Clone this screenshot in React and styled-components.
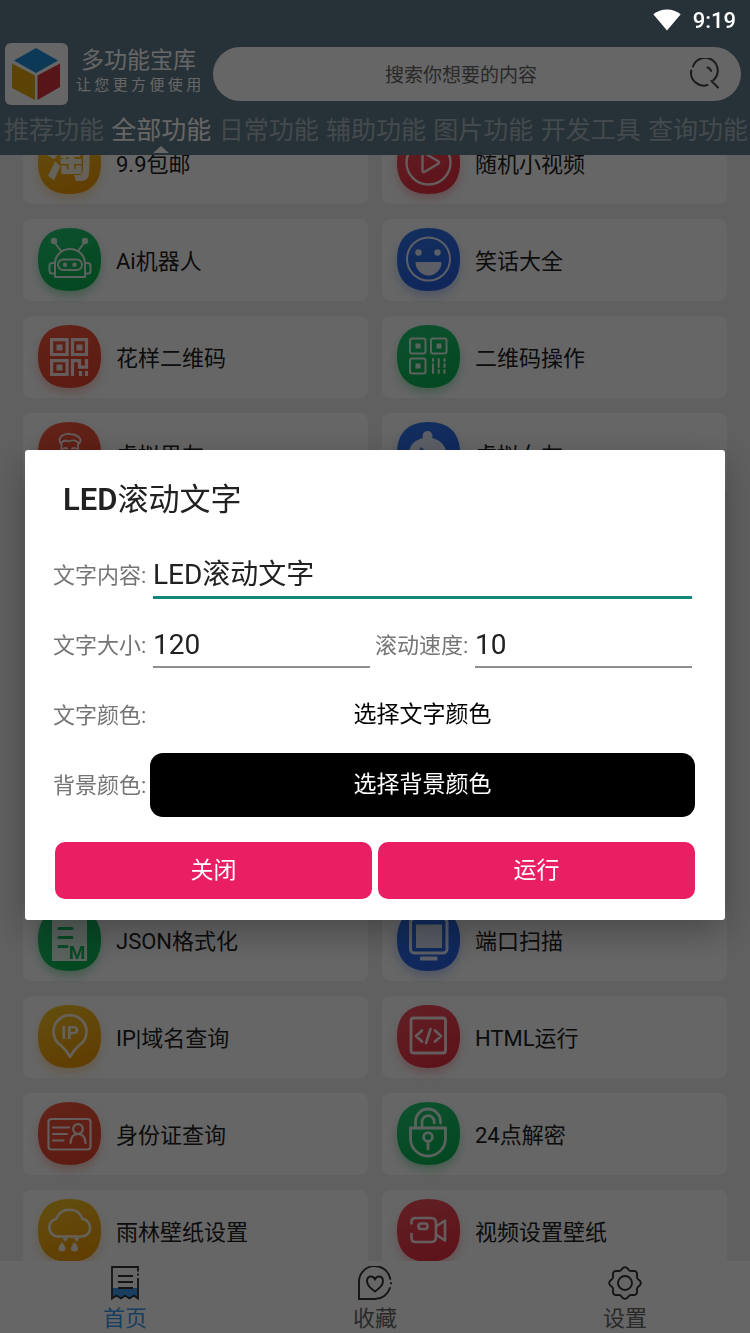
import React, { useId } from "react";
import styled, { createGlobalStyle } from "styled-components";

const GlobalStyle = createGlobalStyle`
  *, *::before, *::after { box-sizing: border-box; }
  body {
    margin: 0;
    background: #f0f0f0;
    font-family: Roboto, "Noto Sans CJK SC", sans-serif;
    color: #212121;
  }
  button, input { font: inherit; color: inherit; }
`;

/* ---------- page frame ---------- */

const Page = styled.div`
  height: 100vh;
  display: flex;
  flex-direction: column;
  overflow: hidden;
`;

const StatusBar = styled.div`
  position: fixed;
  top: 0;
  right: 0;
  z-index: 20;
  height: 40px;
  padding-right: 14px;
  display: flex;
  align-items: center;
  gap: 12px;
  color: #fff;
  font-size: 22px;
  font-weight: 500;
  svg { display: block; }
`;

const Header = styled.header`
  flex: none;
  padding-top: 43px;
  background: #607d8b;
  color: #fff;
`;

const Brand = styled.div`
  display: flex;
  align-items: center;
  height: 62px;
  padding: 0 9px 0 5px;
`;

const Logo = styled.svg`
  flex: none;
  width: 63px;
  height: 62px;
  margin-right: 8px;
`;

const BrandText = styled.div`
  flex: none;
  margin-right: 12px;
  padding-bottom: 4px;
  text-align: center;
  white-space: nowrap;
`;

const BrandName = styled.h1`
  margin: 0;
  font-size: 23px;
  font-weight: 400;
  line-height: 24px;
`;

const Slogan = styled.p`
  margin: 0;
  font-family: "Noto Sans CJK SC", sans-serif;
  font-size: 15px;
  line-height: 22px;
`;

const SearchBox = styled.label`
  flex: 1;
  min-width: 0;
  height: 54px;
  padding: 0 20px;
  display: flex;
  align-items: center;
  border-radius: 27px;
  background: #fff;
  color: #444;
  svg { flex: none; }
`;

const SearchInput = styled.input`
  flex: 1;
  min-width: 0;
  padding: 2px 0 0;
  border: 0;
  outline: 0;
  background: none;
  text-align: center;
  font-size: 19px;
  &::placeholder { color: #666; opacity: 1; }
`;

const Tabs = styled.nav`
  display: flex;
  justify-content: space-between;
  padding: 0 2px 0 4px;
`;

const Tab = styled.button`
  position: relative;
  flex: none;
  height: 50px;
  padding: 0 0 5px;
  border: 0;
  background: none;
  font-size: 25px;
  white-space: nowrap;
  color: ${(p) => (p.$active ? "#fff" : "rgba(255,255,255,.48)")};
  &::after {
    content: "";
    display: ${(p) => (p.$active ? "block" : "none")};
    position: absolute;
    left: calc(50% - 8px);
    bottom: 2px;
    border: 8px solid transparent;
    border-top: 0;
    border-bottom: 7px solid #fff;
  }
`;

/* ---------- function list ---------- */

const Content = styled.main`
  flex: 1;
  min-height: 0;
  padding: 0 23px;
  overflow: hidden;
  display: flex;
  flex-direction: column;
  justify-content: space-between;
`;

const Grid = styled.div`
  flex: none;
  display: grid;
  grid-template-columns: 1fr 1fr;
  gap: 15px 14px;
  margin-top: ${(p) => p.$above || 0}px;
  margin-bottom: ${(p) => p.$below || 0}px;
`;

const Card = styled.a`
  display: flex;
  align-items: center;
  gap: 15px;
  height: 82px;
  padding: 0 15px 2px;
  border-radius: 8px;
  background: #fefefe;
  color: inherit;
  text-decoration: none;
`;

const CardName = styled.span`
  padding-top: 5px;
  font-size: 22px;
  line-height: 32px;
  white-space: nowrap;
`;

const Tile = styled.svg`
  flex: none;
  width: 63px;
  height: 63px;
  overflow: visible;
  filter: drop-shadow(0 5px 4px ${(p) => p.$glow});
`;

/* ---------- bottom bar ---------- */

const BottomBar = styled.nav`
  flex: none;
  height: 72px;
  display: grid;
  grid-template-columns: repeat(3, 1fr);
  background: #fff;
`;

const BottomItem = styled.a`
  display: flex;
  flex-direction: column;
  align-items: center;
  padding-top: 5px;
  color: ${(p) => (p.$active ? "#3d9bf0" : "#666")};
  text-decoration: none;
  font-size: 22px;
  line-height: 38px;
  svg { display: block; color: #333; }
`;

/* ---------- dialog ---------- */

const Scrim = styled.div`
  position: fixed;
  inset: 0;
  z-index: 10;
  padding: 37px 25px 0;
  display: flex;
  align-items: center;
  background: rgba(0, 0, 0, 0.6);
`;

const Dialog = styled.form`
  width: 100%;
  padding: 0 30px 21px 28px;
  border-radius: 3px;
  background: #fff;
  box-shadow: 0 12px 36px rgba(0, 0, 0, 0.3);
`;

const DialogTitle = styled.h2`
  margin: 0;
  padding: 30px 10px 20px;
  font-size: 31px;
  font-weight: 600;
  line-height: 40px;
`;

const Regular = styled.span`
  font-weight: 400;
`;

const Row = styled.div`
  display: flex;
  align-items: center;
  height: 70px;
`;

const Label = styled.label`
  flex: none;
  width: 97px;
  padding-top: 2px;
  font-size: 22px;
  line-height: 32px;
  white-space: nowrap;
  color: #757575;
`;

const Field = styled.input`
  flex: 1 1 0;
  min-width: 0;
  height: ${(p) => (p.$active ? 48 : 46)}px;
  margin: 0 3px;
  padding: 0 0 ${(p) => (p.$active ? 4 : 0)}px;
  border: 0;
  border-bottom: ${(p) => (p.$active ? "3px solid #12877a" : "2px solid #8f8f8f")};
  border-radius: 0;
  outline: 0;
  background: none;
  font-size: 28px;
`;

const Spacer = styled.span`
  flex: none;
  width: 2px;
`;

const ColorButton = styled.button`
  flex: 1;
  height: 64px;
  padding: 0 0 6px;
  border: 0;
  border-radius: 13px;
  background: ${(p) => (p.$dark ? "#000" : "#fff")};
  color: ${(p) => (p.$dark ? "#fff" : "#000")};
  font-size: 23px;
`;

const Actions = styled.div`
  display: flex;
  gap: 6px;
  margin: 22px 0 0 2px;
`;

const Action = styled.button`
  flex: 1;
  height: 57px;
  padding: 0 0 6px;
  border: 0;
  border-radius: 10px;
  background: #e91e63;
  color: #fff;
  font-size: 23px;
`;

/* ---------- drawings ---------- */

const TONES = {
  green: ["#1fc873", "#0bb452", "rgba(20,190,95,.35)"],
  orange: ["#f4573c", "#e8452f", "rgba(240,80,55,.3)"],
  blue: ["#2f76ea", "#2860e6", "rgba(45,105,235,.3)"],
  red: ["#f0505c", "#ea2f41", "rgba(240,60,75,.3)"],
  yellow: ["#f6c325", "#f29a06", "rgba(245,165,20,.3)"],
};

const GLYPHS = {
  tao: (
    <text x="31" y="45" fontSize="46" fontWeight="900" textAnchor="middle" fill="#fff" fontFamily="Noto Sans CJK SC">淘</text>
  ),
  play: (
    <g strokeWidth="2.4">
      <circle cx="31.5" cy="31.500" r="22" />
      <path d="M25.500 23.500v16q0 2.500 2.200 1.300l13.500-8q1.800-1.300 0-2.500l-13.500-8q-2.200-1.300-2.200 1.200z" />
    </g>
  ),
  robot: (
    <g strokeWidth="2">
      <circle cx="16" cy="13" r="2.200" fill="#fff" />
      <circle cx="47" cy="13" r="2.200" fill="#fff" />
      <path d="M17 15l6 8M46 15l-6 8M17 49V35.500a15 14.500 0 0 1 30 0V49zM17 35h-3q-2.500 0-2.500 2.500V43q0 2.500 2.500 2.500h3M47 35h3q2.500 0 2.500 2.500V43q0 2.500-2.500 2.500h-3" />
      <rect x="20" y="31.500" width="24" height="10.500" rx="5.200" />
      <circle cx="27" cy="36.700" r="1.200" fill="#fff" />
      <circle cx="36.500" cy="36.700" r="1.200" fill="#fff" />
    </g>
  ),
  smile: (
    <g>
      <circle cx="31.500" cy="31" r="21.500" strokeWidth="2" />
      <circle cx="21.500" cy="24.500" r="3.200" fill="#fff" stroke="none" />
      <circle cx="40.500" cy="24.500" r="3.200" fill="#fff" stroke="none" />
      <path d="M18.500 34h26a13 13.500 0 0 1-26 0z" fill="#fff" stroke="none" />
    </g>
  ),
  qrBold: (
    <g strokeWidth="3.200" strokeLinejoin="miter" strokeLinecap="butt">
      <path d="M13.600 14.600h15.500V29.500H13.600zM34.500 14.600H48.500V29.500H34.500zM13.600 35.600h15.500V49.500H13.600z" />
      <path d="M18.500 19.500h6v6h-6zM38.500 19.500h6v6h-6zM18.500 39.500h6v6h-6z" fill="#fff" stroke="none" />
      <path d="M34.500 51V35.600h7v6.500h7V34M42.500 46v5M48.500 46v5" />
    </g>
  ),
  qrThin: (
    <g strokeWidth="2">
      <rect x="13" y="13.500" width="15.500" height="15" rx="2" />
      <rect x="34" y="13.500" width="15.500" height="15" rx="2" />
      <rect x="13" y="33.500" width="15.500" height="15" rx="2" />
      <path d="M18.500 18.500h5v5h-5zM39.500 18.500h5v5h-5zM18.500 38.500h5v5h-5z" fill="#fff" stroke="none" />
      <path d="M36 34v2M36 39v9M41.700 34v8M41.700 45v3M47.500 34v2M47.500 39v3M47.500 45v3" />
    </g>
  ),
  man: (
    <g strokeWidth="1.800">
      <path d="M22.500 21.500q-2.500-5.500 2-8Q27.500 11.500 32 12q8 .5 10.500 5.500.5 2-1.500 4-3-4-7-3-3.500 1.500-6 0-3 0-5.500 3z" />
      <path d="M23.500 22v5q0 9 8.500 10 8-1 8-10v-5M25.500 26.500q2-1 4 0M34 26.500q2-1 4 0M16 52q1-10 10-12M47 52q-1-10-10-12" />
    </g>
  ),
  woman: (
    <g>
      <circle cx="30.500" cy="14" r="5" fill="#fff" stroke="none" />
      <path d="M12 42V31a18.500 15.500 0 0 1 37 0v11z" fill="#fff" stroke="none" />
      <path d="M24 26q-2 6-6 9M24 26q6 6 17 7" stroke="#3b78e8" strokeWidth="1.600" />
    </g>
  ),
  json: (
    <g>
      <path d="M16.500 9H49v44H14V11.500Q14 9 16.500 9z" fill="#fff" stroke="none" />
      <path d="M21 20.500h13M21 29.500h13M21 38.500h8" stroke="#12b95c" strokeWidth="3.200" />
      <text x="39" y="50.500" fontSize="19" fontWeight="700" textAnchor="middle" fill="#12b95c" stroke="none" fontFamily="Roboto">M</text>
    </g>
  ),
  monitor: (
    <g>
      <rect x="13.500" y="10.500" width="36.500" height="34.500" rx="4" strokeWidth="3" />
      <path d="M19 16.500h26v23.500H19z" fill="#fff" fillOpacity=".95" stroke="none" />
      <rect x="23" y="48.500" width="17.500" height="4" rx="1" fill="#fff" stroke="none" />
    </g>
  ),
  pin: (
    <g>
      <path d="M32 52q-3.500-7-9-11.500a16.500 16.500 0 1 1 18 0Q35.500 45 32 52z" strokeWidth="2.600" />
      <text x="32" y="34" fontSize="19" fontWeight="700" textAnchor="middle" fill="#fff" stroke="none" fontFamily="Roboto">IP</text>
    </g>
  ),
  code: (
    <g strokeWidth="2.800">
      <rect x="14" y="13" width="34.500" height="35" rx="2.500" />
      <path d="M25 25.500l-6 5.500 6 5.500M38 25.500l6 5.500-6 5.500M33.500 24l-4.500 14" strokeWidth="2.600" />
    </g>
  ),
  idCard: (
    <g strokeWidth="2.200">
      <rect x="10.500" y="17" width="42" height="30.500" rx="3" />
      <path d="M15 25.500h16M15 32h14M15 38.500h10.500M32.500 41q.5-9 7.500-9t7.500 9" />
      <circle cx="40" cy="27" r="4.800" />
    </g>
  ),
  lock: (
    <g strokeWidth="2.800">
      <path d="M13.500 26h35v10.500a17.500 17.500 0 0 1-35 0z" />
      <path d="M18.500 25v-5.500a12.500 12.500 0 0 1 25 0V21M25 25v-5a6 6 0 0 1 12.200-.5V21" />
      <circle cx="31" cy="35" r="4.400" />
      <path d="M31 40v7" />
    </g>
  ),
  rain: (
    <g>
      <path d="M19.500 37.500a9 9 0 0 1-1-17.800q3-9 13-9t13 9.300a8.800 8.800 0 0 1-.5 17.500z" strokeWidth="2.600" />
      <path d="M24 39h6l-2.500 3.800zM35.500 39h6L39 42.800zM24 43q7 9 0 9.500-7-.5 0-9.500zM36.500 43q7 9 0 9.500-7-.5 0-9.500z" fill="#fff" stroke="none" />
    </g>
  ),
  video: (
    <g strokeWidth="2.600">
      <path d="M14.500 24.500V23q0-4 4-4h15.500q5 0 5 5v14q0 5-5 5H18.500q-4 0-4-4v-4" />
      <path d="M39 27.500l9-6v20l-9-6" />
      <rect x="21.500" y="24.500" width="9" height="5.500" rx="2.600" />
    </g>
  ),
};

function FunctionIcon({ tone, glyph }) {
  const id = useId();
  const [from, to, glow] = TONES[tone];
  return (
    <Tile viewBox="0 0 63 63" $glow={glow} aria-hidden="true">
      <linearGradient id={id} x1="0.2" y1="0" x2="0.6" y2="1">
        <stop offset="0" stopColor={from} />
        <stop offset="1" stopColor={to} />
      </linearGradient>
      <path d="M31.500 0C52 0 63 11 63 31.500S52 63 31.500 63 0 52 0 31.500 11 0 31.500 0z" fill={`url(#${id})`} />
      <g fill="none" stroke={glyph === "tao" ? "none" : "#fff"} strokeLinecap="round" strokeLinejoin="round" opacity=".88">
        {GLYPHS[glyph]}
      </g>
    </Tile>
  );
}

const WifiIcon = () => (
  <svg width="28" height="24" viewBox="0 0 28 24" fill="#fff" aria-hidden="true">
    <path d="M14 22.500L.3 6.200Q6.300 1.500 14 1.500t13.700 4.700z" />
  </svg>
);

const SearchIcon = () => (
  <svg width="32" height="32" viewBox="0 0 32 32" fill="none" stroke="currentColor" strokeWidth="2" strokeLinecap="round" aria-hidden="true">
    <path d="M4 8.500A12.700 12.700 0 1 1 24.500 22M18.500 27A12.700 12.700 0 0 1 2.300 12.500M18.500 9.500q3 1 3.500 3.500M22.500 23l6.500 6.500" />
  </svg>
);

const HomeIcon = () => (
  <svg width="28" height="34" viewBox="0 0 28 34" fill="none" stroke="currentColor" strokeWidth="1.800" aria-hidden="true">
    <path d="M1 22h26v10l-4-2.500-4.500 3-4.500-3-4.500 3-4.500-3L1 32z" fill="#3d9bf0" stroke="none" />
    <path d="M27 5.500V1H1v31.500l4.500-3 4.500 3 4-3 4.500 3 4.500-3 4 3V12M27 7.500v2M7 10h15M7 16h15M7 22h15" />
  </svg>
);

const HeartIcon = () => (
  <svg width="34" height="34" viewBox="0 0 34 34" fill="none" stroke="currentColor" strokeWidth="1.900" strokeLinecap="round" aria-hidden="true">
    <path d="M32.300 13A15.800 15.800 0 0 0 1 17v16h16a16 16 0 0 0 15-11M33 17v.5" />
    <path d="M17 25.500q-8-5.500-8-10.200Q9 10.500 13 10.500q2.500 0 4 2.700 1.500-2.700 4-2.700 4 0 4 4.800 0 4.700-8 10.200z" />
  </svg>
);

const GEAR_OUTLINE =
  Array.from({ length: 120 }, (_, i) => {
    const a = (i / 120) * Math.PI * 2;
    const r = 14.5 + 1.3 * Math.cos(8 * a);
    return `${i ? "L" : "M"}${(17 + r * Math.cos(a)).toFixed(2)} ${(17 + r * Math.sin(a)).toFixed(2)}`;
  }).join("") + "z";

const GearIcon = () => (
  <svg width="34" height="34" viewBox="0 0 34 34" fill="none" stroke="currentColor" strokeWidth="1.900" strokeLinejoin="round" aria-hidden="true">
    <path d={GEAR_OUTLINE} />
    <circle cx="17" cy="17" r="7" />
  </svg>
);

const CubeLogo = () => (
  <Logo viewBox="0 0 63 62" role="img" aria-label="多功能宝库">
    <rect width="63" height="62" rx="6" fill="#fff" />
    <path d="M31 5l22 12.500L31 30 9 17.500z" fill="#1f8fd6" />
    <path d="M7 20.500L30 32.500V57L7 45z" fill="#e0a80c" />
    <path d="M32.500 32.500L55 20.500V44L32.500 57z" fill="#d9333f" />
  </Logo>
);

/* ---------- data ---------- */

const TABS = ["推荐功能", "全部功能", "日常功能", "辅助功能", "图片功能", "开发工具", "查询功能"];

const FIRST_CARDS = [
  ["9.9包邮", "yellow", "tao"],
  ["随机小视频", "red", "play"],
  ["Ai机器人", "green", "robot"],
  ["笑话大全", "blue", "smile"],
  ["花样二维码", "orange", "qrBold"],
  ["二维码操作", "green", "qrThin"],
  ["虚拟男友", "orange", "man"],
  ["虚拟女友", "blue", "woman"],
];

const LAST_CARDS = [
  ["JSON格式化", "green", "json"],
  ["端口扫描", "blue", "monitor"],
  ["IP|域名查询", "yellow", "pin"],
  ["HTML运行", "red", "code"],
  ["身份证查询", "orange", "idCard"],
  ["24点解密", "green", "lock"],
  ["雨林壁纸设置", "yellow", "rain"],
  ["视频设置壁纸", "red", "video"],
];

const Cards = ({ items, ...offsets }) => (
  <Grid {...offsets}>
    {items.map(([name, tone, glyph]) => (
      <Card href="#" key={name}>
        <FunctionIcon tone={tone} glyph={glyph} />
        <CardName>{name}</CardName>
      </Card>
    ))}
  </Grid>
);

export default function App() {
  return (
    <>
      <GlobalStyle />
      <StatusBar>
        <WifiIcon />
        9:19
      </StatusBar>

      <Page>
        <Header>
          <Brand>
            <CubeLogo />
            <BrandText>
              <BrandName>多功能宝库</BrandName>
              <Slogan>让 您 更 方 便 使 用</Slogan>
            </BrandText>
            <SearchBox>
              <SearchInput type="text" placeholder="搜索你想要的内容" aria-label="搜索" />
              <SearchIcon />
            </SearchBox>
          </Brand>
          <Tabs>
            {TABS.map((name) => (
              <Tab type="button" key={name} $active={name === "全部功能"}>
                {name}
              </Tab>
            ))}
          </Tabs>
        </Header>

        <Content>
          <Cards items={FIRST_CARDS} $above={-33} />
          <Cards items={LAST_CARDS} $below={-11} />
        </Content>

        <BottomBar>
          <BottomItem href="#" $active>
            <HomeIcon />
            首页
          </BottomItem>
          <BottomItem href="#">
            <HeartIcon />
            收藏
          </BottomItem>
          <BottomItem href="#">
            <GearIcon />
            设置
          </BottomItem>
        </BottomBar>
      </Page>

      <Scrim>
        <Dialog role="dialog" aria-labelledby="dialog-title" onSubmit={(e) => e.preventDefault()}>
          <DialogTitle id="dialog-title">
            LED<Regular>滚动文字</Regular>
          </DialogTitle>
          <Row>
            <Label htmlFor="led-text">文字内容:</Label>
            <Field id="led-text" type="text" defaultValue="LED滚动文字" $active />
          </Row>
          <Row>
            <Label htmlFor="led-size">文字大小:</Label>
            <Field id="led-size" type="text" inputMode="numeric" defaultValue="120" />
            <Spacer />
            <Label htmlFor="led-speed">滚动速度:</Label>
            <Field id="led-speed" type="text" inputMode="numeric" defaultValue="10" />
          </Row>
          <Row>
            <Label htmlFor="led-color">文字颜色:</Label>
            <ColorButton id="led-color" type="button">选择文字颜色</ColorButton>
          </Row>
          <Row>
            <Label htmlFor="led-background">背景颜色:</Label>
            <ColorButton id="led-background" type="button" $dark>选择背景颜色</ColorButton>
          </Row>
          <Actions>
            <Action type="button">关闭</Action>
            <Action type="submit">运行</Action>
          </Actions>
        </Dialog>
      </Scrim>
    </>
  );
}
